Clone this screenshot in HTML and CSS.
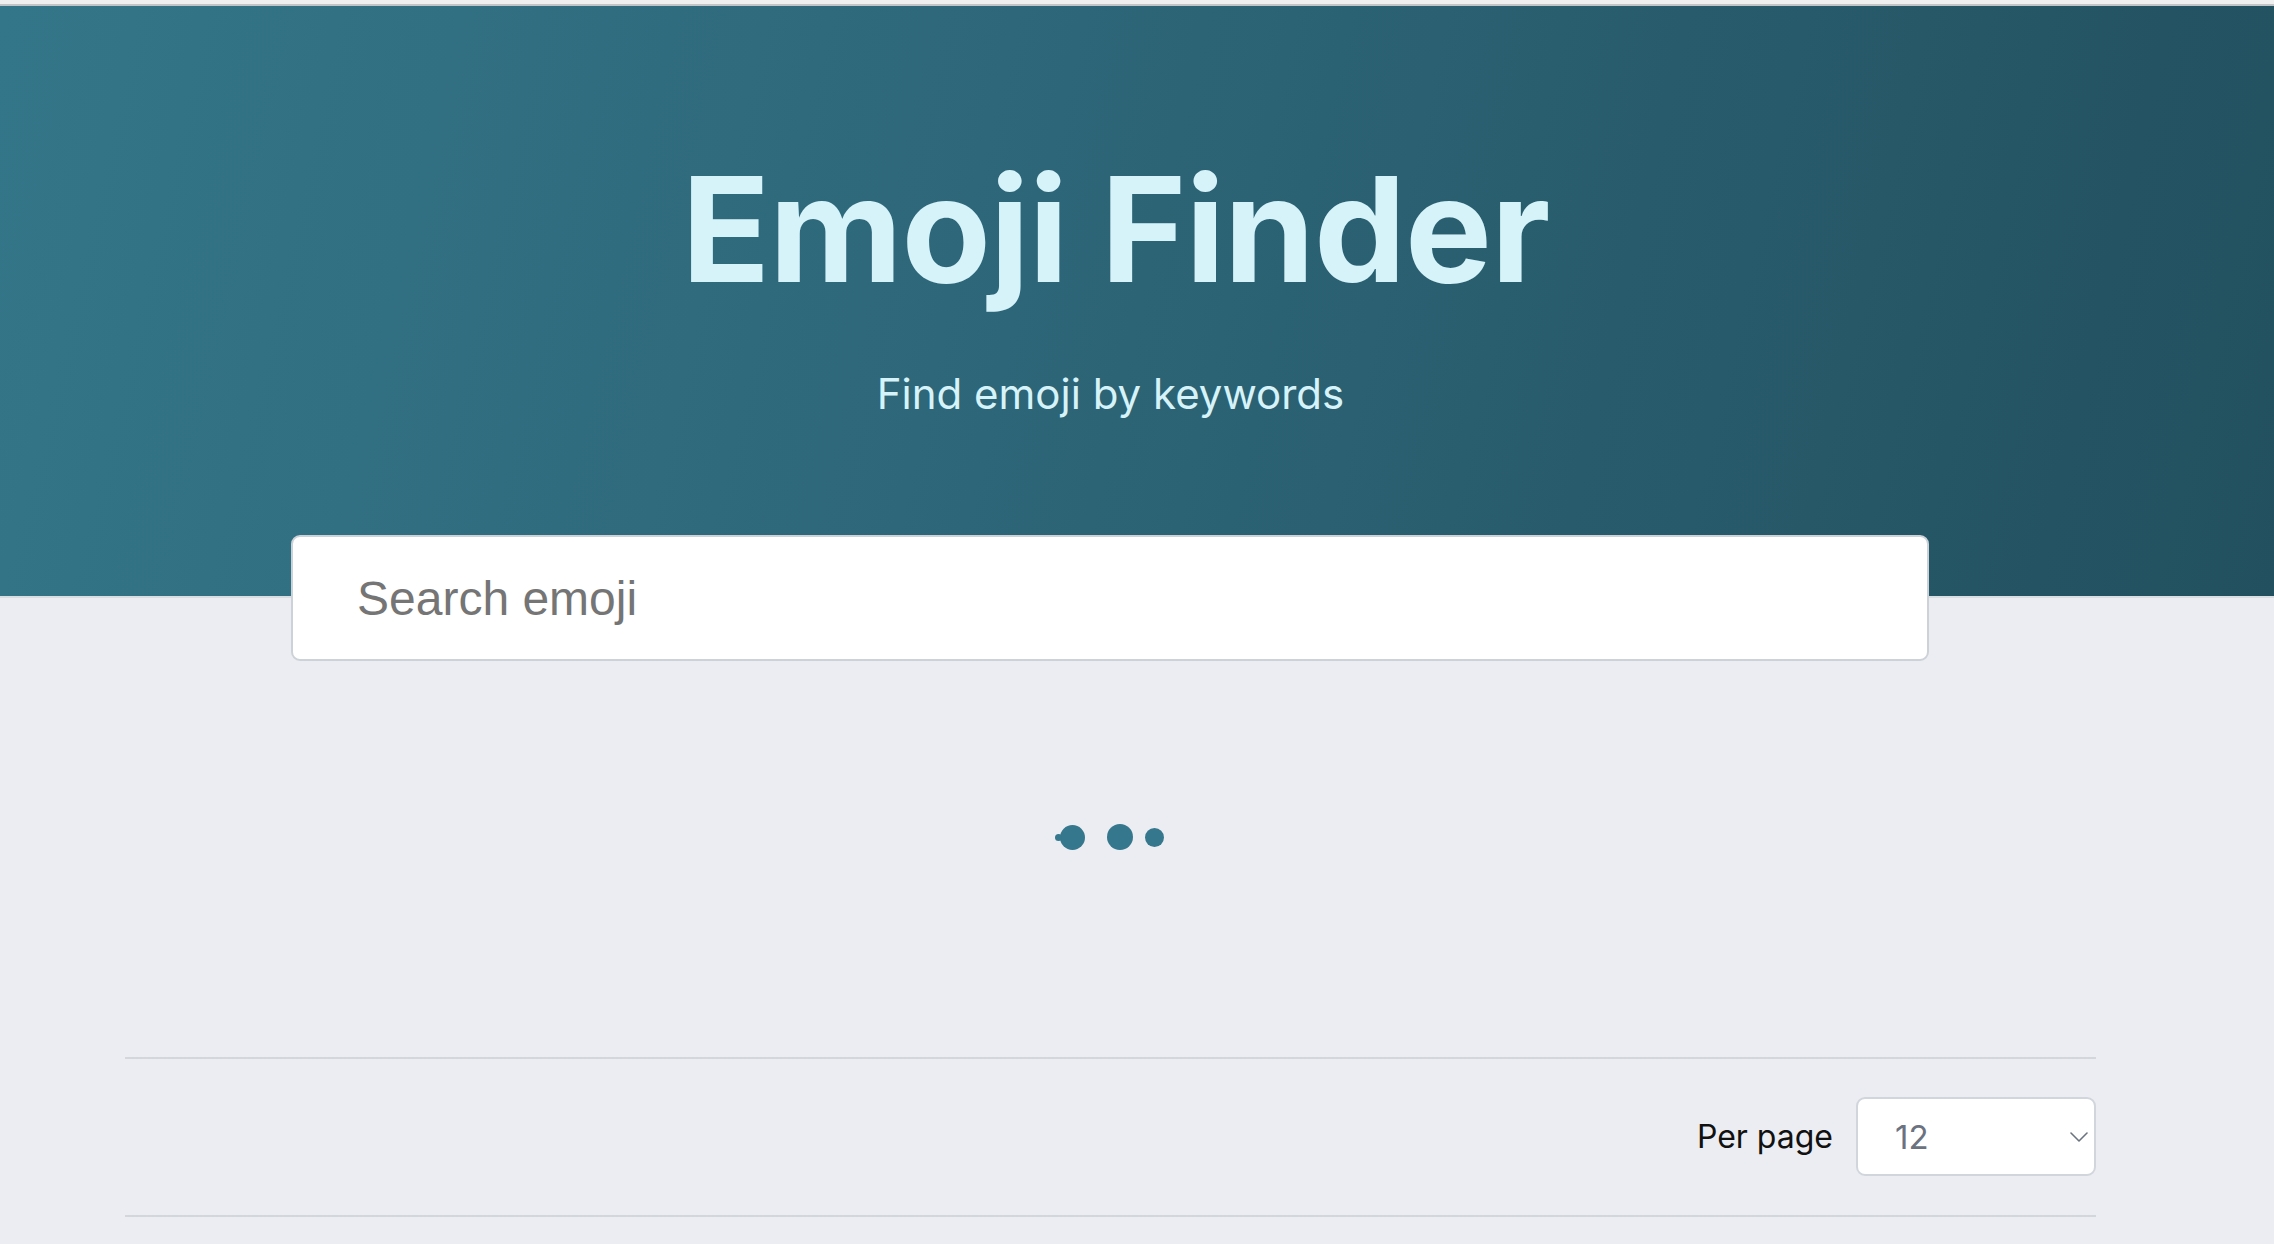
FILE: index.html
```html
<!DOCTYPE html>
<html lang="en">
<head>
<meta charset="utf-8">
<title>Emoji Finder</title>
<link rel="stylesheet" href="styles.css">
</head>
<body>
<div class="topbar"></div>
<header class="hero">
  <h1 class="hero-title">Emoji Finder</h1>
  <p class="hero-subtitle">Find emoji by keywords</p>
</header>
<main class="container">
  <div class="search-wrap">
    <input class="search-input" type="text" placeholder="Search emoji">
  </div>
  <div class="loader">
    <span class="dot dot-one"></span>
    <span class="dot dot-two"></span>
    <span class="dot dot-three"></span>
  </div>
  <div class="pager-bar">
    <label class="per-page-label" for="perpage">Per page</label>
    <div class="select-wrap">
      <select id="perpage" class="per-page-select">
        <option>12</option>
        <option>24</option>
        <option>48</option>
      </select>
      <svg class="chevron" width="18" height="10" viewBox="0 0 18 10" aria-hidden="true">
        <path d="M1 1 L9 9 L17 1" fill="none" stroke="#6b7280" stroke-width="1.6" stroke-linecap="round" stroke-linejoin="round"/>
      </svg>
    </div>
  </div>
</main>
</body>
</html>
```
FILE: styles.css
```css
* { box-sizing: border-box; }

html, body {
  margin: 0;
  padding: 0;
}

body {
  background: #ecedf2;
  font-family: Inter, "Noto Sans", "DejaVu Sans", sans-serif;
  min-height: 1244px;
}

.topbar {
  height: 6px;
  background: #efefef;
  border-bottom: 2px solid #c2c4c6;
}

.hero {
  background: linear-gradient(103deg, #347689 0%, #2d6678 45%, #22505f 100%);
  border-bottom: 2px solid #d9dee3;
  padding: 150px 53px 0 0;
  height: 592px;
  text-align: center;
}

.hero-title {
  margin: 0;
  padding-left: 10px;
  font-family: Inter, "Noto Sans", sans-serif;
  font-weight: 700;
  font-size: 146px;
  line-height: 146px;
  color: #d6f3fa;
  letter-spacing: -1px;
}

.hero-subtitle {
  margin: 71px 0 0 0;
  font-family: Inter, "Noto Sans", sans-serif;
  font-weight: 400;
  font-size: 42px;
  line-height: 42px;
  color: #d6f3fa;
}

.container {
  margin-left: 125px;
  width: 1971px;
  margin-top: -63px;
}

.search-wrap {
  padding: 0 167px 0 166px;
}

.search-input {
  display: block;
  width: 100%;
  height: 126px;
  border: 2px solid #cdd2d8;
  border-radius: 9px;
  background: #ffffff;
  padding: 0 0 0 64px;
  font-family: "Liberation Sans", Arial, sans-serif;
  font-size: 48px;
  color: #333;
  outline: none;
}

.search-input::placeholder {
  color: #757575;
}

.loader {
  display: flex;
  align-items: center;
  height: 396px;
  padding: 163px 0 207px 935px;
}

.dot {
  display: block;
  border-radius: 50%;
  background: #35778c;
  flex: none;
}

.dot-one {
  position: relative;
  width: 25px;
  height: 25px;
}

.dot-one::before {
  content: "";
  position: absolute;
  left: -5px;
  top: 9px;
  width: 7px;
  height: 7px;
  border-radius: 50%;
  background: #35778c;
}

.dot-two {
  width: 26px;
  height: 26px;
  margin-left: 22px;
}

.dot-three {
  width: 19px;
  height: 19px;
  margin-left: 12px;
}

.pager-bar {
  display: flex;
  justify-content: flex-end;
  align-items: center;
  border-top: 2px solid #d3d6db;
  border-bottom: 2px solid #d3d6db;
  padding: 38px 0 39px 0;
}

.per-page-label {
  font-family: Inter, "Noto Sans", sans-serif;
  font-size: 32px;
  color: #111111;
  margin-right: 23px;
}

.select-wrap {
  position: relative;
  width: 240px;
  height: 79px;
}

.per-page-select {
  -webkit-appearance: none;
  appearance: none;
  width: 100%;
  height: 100%;
  border: 2px solid #d1d6dc;
  border-radius: 9px;
  background: #ffffff;
  padding: 0 0 0 37px;
  font-family: Inter, "Noto Sans", sans-serif;
  font-size: 33px;
  color: #6b7280;
  outline: none;
}

.chevron {
  position: absolute;
  right: 8px;
  top: 35px;
  pointer-events: none;
}
```
